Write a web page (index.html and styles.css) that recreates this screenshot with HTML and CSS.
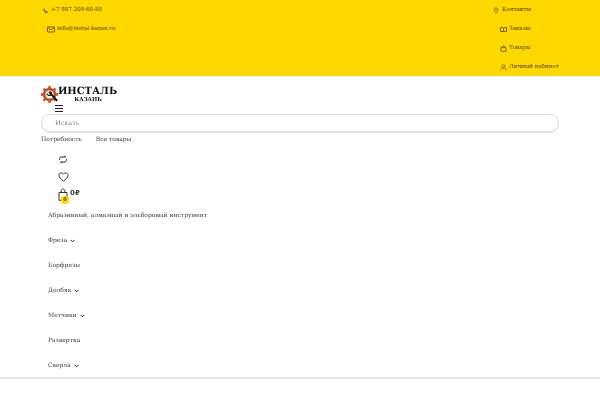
FILE: index.html
```html
<!DOCTYPE html>
<html lang="ru">
<head>
<meta charset="utf-8">
<title>Инсталь Казань</title>
<link rel="stylesheet" href="styles.css">
</head>
<body>
<header class="topbar">
  <div class="top-left">
    <a class="top-item phone"><svg class="ico" viewBox="0 0 8 8"><path d="M1.2.8 2.6.5l.9 1.800-.9.7c.4.9 1 1.500 1.900 1.900l.7-.9 1.800.9-.3 1.400C7 6.900 6.300 7.300 5.500 7.100 3.300 6.500 1.500 4.700.9 2.500.7 1.700.8 1.200 1.200.8z" fill="#4a3d00"/></svg><span>+7 987 209-60-80</span></a>
    <a class="top-item mail"><svg class="ico" viewBox="0 0 8 7"><rect x=".5" y="1" width="7" height="5" rx=".6" fill="none" stroke="#4a3d00" stroke-width=".8"/><path d="M1 1.700 4 4l3-2.300" fill="none" stroke="#4a3d00" stroke-width=".7"/></svg><span>info@instal-kazan.ru</span></a>
  </div>
  <div class="top-right">
    <a class="top-item contacts"><svg class="ico" viewBox="0 0 8 8"><path d="M4 7.500C2.700 5.800 1.600 4.500 1.600 3A2.400 2.400 0 0 1 6.400 3C6.400 4.500 5.300 5.800 4 7.500z" fill="none" stroke="#4a3d00" stroke-width=".8"/><circle cx="4" cy="3" r=".8" fill="#4a3d00"/></svg><span>Контакты</span></a>
    <a class="top-item sub"><svg class="ico" viewBox="0 0 8 8"><path d="M.6 1.800h2.600l.8.6.8-.6h2.600v4.400H.6z" fill="none" stroke="#4a3d00" stroke-width=".9"/><path d="M4 2.400v3.800" stroke="#4a3d00" stroke-width=".7"/></svg><span>Заказы</span></a>
    <a class="top-item sub"><svg class="ico" viewBox="0 0 8 8"><path d="M1.300 3h5.400v4.300H1.300zM2.600 3C2.600 1.500 3.200.9 4 .9s1.400.6 1.400 2.100" fill="none" stroke="#4a3d00" stroke-width=".8"/></svg><span>Товары</span></a>
    <a class="top-item sub"><svg class="ico" viewBox="0 0 8 8"><circle cx="4" cy="2.500" r="1.700" fill="none" stroke="#4a3d00" stroke-width=".7"/><path d="M1 7.400C1 5.600 2.300 4.700 4 4.700s3 .9 3 2.700" fill="none" stroke="#4a3d00" stroke-width=".7"/></svg><span>Личный кабинет</span></a>
  </div>
</header>
<div class="panel">
  <a class="logo">
    <svg class="gear" viewBox="0 0 20 20"><circle cx="9.500" cy="9.500" r="6" fill="none" stroke="#c4501f" stroke-width="3"/><g stroke="#c4501f" stroke-width="2.800"><path d="M9.500 0v3M9.500 16v3M0 9.500h3M16 9.500h3M2.800 2.800 5 5M14 14l2.200 2.200M2.800 16.200 5 14M14 5l2.200-2.200"/></g><path d="M9 6.500 18 16.500" stroke="#15151f" stroke-width="2.200" fill="none"/><path d="M6.500 8.500c.6 2 3 2.500 4.300 1.400 1-1 .8-2.800-.4-3.800" stroke="#15151f" stroke-width="1.500" fill="none"/></svg>
    <span class="logo-text"><b class="logo-main">ИНСТАЛЬ</b><b class="logo-sub">КАЗАНЬ</b></span>
  </a>
  <div class="burger"><i></i><i></i><i></i></div>
  <div class="search"><span>Искать</span></div>
  <nav class="tabs"><a>Потребность</a><a>Все товары</a></nav>
  <div class="actions">
    <a class="act"><svg viewBox="0 0 12 10" width="10" height="9"><path d="M2 5.500V3.800C2 2.800 2.700 2 3.700 2H9l-1.300-1.500M10 4.500v1.700C10 7.200 9.300 8 8.300 8H3l1.300 1.500" fill="none" stroke="#222" stroke-width="1.200"/></svg></a>
    <a class="act"><svg viewBox="0 0 12 11" width="11" height="10"><path d="M6 10C3.500 8 1 6 1 3.700 1 2 2.200 1 3.500 1 4.500 1 5.400 1.500 6 2.500 6.600 1.500 7.500 1 8.500 1 9.800 1 11 2 11 3.700 11 6 8.500 8 6 10z" fill="none" stroke="#222" stroke-width="1"/></svg></a>
    <a class="act cart"><svg viewBox="0 0 10 13" width="10" height="13"><path d="M1 4.500h8v7.800H1zM3 4.500C3 1.800 3.800 1 5 1s2 .8 2 3.500" fill="none" stroke="#333" stroke-width="1"/></svg><em class="badge">0</em><strong class="sum">0₽</strong></a>
  </div>
  <ul class="menu">
    <li><a>Абразивный, алмазный и эльборовый инструмент</a></li>
    <li><a>Фреза</a><svg class="chev" viewBox="0 0 6 4"><path d="M.7.700 3 3 5.300.700" fill="none" stroke="#222" stroke-width="1.200"/></svg></li>
    <li><a>Борфрезы</a></li>
    <li><a>Долбяк</a><svg class="chev" viewBox="0 0 6 4"><path d="M.7.700 3 3 5.300.700" fill="none" stroke="#222" stroke-width="1.200"/></svg></li>
    <li><a>Метчики</a><svg class="chev" viewBox="0 0 6 4"><path d="M.7.700 3 3 5.300.700" fill="none" stroke="#222" stroke-width="1.200"/></svg></li>
    <li><a>Развертка</a></li>
    <li><a>Сверла</a><svg class="chev" viewBox="0 0 6 4"><path d="M.7.700 3 3 5.300.700" fill="none" stroke="#222" stroke-width="1.200"/></svg></li>
  </ul>
</div>
</body>
</html>
```
FILE: styles.css
```css
* { box-sizing: border-box; }
html, body { margin: 0; padding: 0; }
body {
  width: 600px;
  height: 400px;
  overflow: hidden;
  background: #fff;
  font-family: "DejaVu Serif", serif;
  font-size: 6px;
  color: #3c3c3c;
  text-rendering: geometricPrecision;
  filter: blur(.3px);
}
.topbar {
  height: 76px;
  background: #ffd800;
  display: flex;
  justify-content: space-between;
  color: #4a3e00;
  padding: 0 41px 0 43px;
  font-size: 5.600px;
}
.top-left, .top-right {
  display: flex;
  flex-direction: column;
  padding-top: 1px;
}
.top-right { width: 68px; }
.top-item {
  height: 19px;
  display: flex;
  align-items: center;
  white-space: nowrap;
  line-height: 19px;
}
.ico { width: 5px; height: 6px; flex: none; }
.phone { gap: 3px; }
.mail { margin-left: 4px; gap: 2px; }
.mail .ico { width: 8px; height: 7px; }
.contacts { gap: 3px; margin-left: 2px; }
.contacts .ico { width: 6px; height: 7px; }
.sub { margin-left: 9px; gap: 2px; }
.sub .ico { width: 7px; height: 7px; }
.panel {
  height: 303px;
  padding: 9px 41px 0;
  border-bottom: 2px solid #e6e6e6;
}
.logo { display: flex; align-items: flex-start; height: 20px; }
.gear { width: 18px; height: 18px; margin-top: 1px; flex: none; }
.logo-text { display: flex; flex-direction: column; align-items: center; color: #111; width: 57px; padding-top: 1px; }
.logo-main { font: bold 10px/11px "DejaVu Serif", serif; letter-spacing: -.05px; }
.logo-sub { font: bold 5.500px/6px "DejaVu Serif", serif; margin-left: 1px; }
.burger {
  margin: 0 0 0 14px;
  width: 8px;
  display: flex;
  flex-direction: column;
  gap: 2px;
  height: 8px;
}
.burger i { display: block; height: 1px; background: #222; }
.search {
  height: 18px;
  margin-top: 1px;
  margin-bottom: -1px;
  border: 1.500px solid #dcdcdc;
  border-radius: 9px;
  box-shadow: 0 1px 1px #e4e4e4;
  padding-left: 13px;
  display: flex;
  align-items: center;
  font-size: 6.500px;
  color: #888;
}
.tabs { display: flex; gap: 14px; margin-top: 3px; height: 13px; line-height: 12px; font-size: 6px; }
.actions { display: flex; flex-direction: column; padding-left: 17px; margin-top: 3px; }
.act { position: relative; display: flex; height: 18px; align-items: center; gap: 3px; }
.cart { height: 17px; }
.badge {
  position: absolute;
  left: 3px;
  top: 10px;
  width: 8px;
  height: 8px;
  border-radius: 50%;
  background: #ffd800;
  box-shadow: 0 0 1px #ffd800;
  font: bold 5px/8px "DejaVu Sans", sans-serif;
  color: #333;
  text-align: center;
}
.sum { font: bold 7px/8px "DejaVu Sans", sans-serif; color: #444; margin-top: -3px; margin-left: -1px; letter-spacing: .2px; }
.menu { list-style: none; margin: 0; padding: 0 0 0 7px; font-size: 6px; }
.menu li { height: 25px; display: flex; align-items: center; gap: 3px; line-height: 12px; }
.chev { width: 5px; height: 4px; }
```
